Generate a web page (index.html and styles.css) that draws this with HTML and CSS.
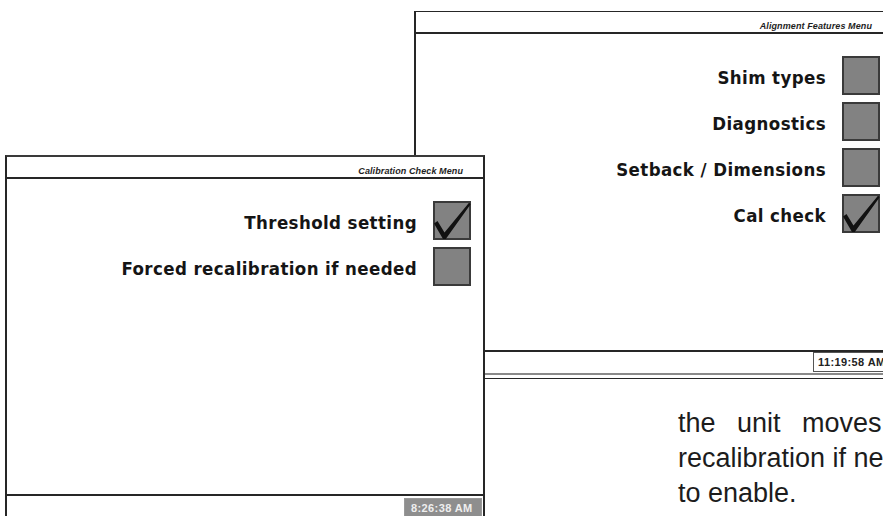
FILE: index.html
```html
<!DOCTYPE html>
<html lang="en">
<head>
<meta charset="utf-8">
<title>Calibration Check Menu</title>
<link rel="stylesheet" href="styles.css">
</head>
<body>
<div class="desk">
  <section class="win win-back">
    <header class="win-title">Alignment Features Menu</header>
    <div class="win-body">
      <ul class="opts">
        <li class="opt"><span class="opt-label">Shim types</span><span class="box"></span></li>
        <li class="opt"><span class="opt-label">Diagnostics</span><span class="box"></span></li>
        <li class="opt"><span class="opt-label">Setback / Dimensions</span><span class="box"></span></li>
        <li class="opt"><span class="opt-label">Cal check</span><span class="box"><svg class="tick" viewBox="2 2 34 34" aria-hidden="true"><path d="M1 22 L4.5 19.5 L11.5 31 L36 1.2 L37.6 2.8 L12.8 37.6 L10 37.6 Z"/></svg></span></li>
      </ul>
    </div>
    <footer class="win-status"><span class="clock">11:19:58 AM</span></footer>
  </section>

  <section class="win win-front">
    <header class="win-title">Calibration Check Menu</header>
    <div class="win-body">
      <ul class="opts">
        <li class="opt"><span class="opt-label">Threshold setting</span><span class="box"><svg class="tick" viewBox="2 2 34 34" aria-hidden="true"><path d="M1 22 L4.5 19.5 L11.5 31 L36 1.2 L37.6 2.8 L12.8 37.6 L10 37.6 Z"/></svg></span></li>
        <li class="opt"><span class="opt-label">Forced recalibration if needed</span><span class="box"></span></li>
      </ul>
    </div>
    <footer class="win-status"><span class="clock clock-dim">8:26:38 AM</span></footer>
  </section>

  <p class="caption"><span class="caption-first">the unit moves</span><br>recalibration if needed<br>to enable.</p>
</div>
</body>
</html>
```

FILE: styles.css
```css
html, body {
  margin: 0;
  padding: 0;
  background: #fff;
  overflow: hidden;
}

.desk {
  position: relative;
  width: 883px;
  height: 516px;
  overflow: hidden;
  background: #fff;
}

.win {
  position: absolute;
  width: 480px;
  height: 368px;
  box-sizing: border-box;
  background: #fff;
  border: 2px solid #262626;
  border-top-width: 1px;
  border-bottom-width: 1px;
  display: flex;
  flex-direction: column;
}

.win-back {
  left: 414px;
  top: 11px;
  z-index: 1;
}

.win-front {
  left: 5px;
  top: 155px;
  border-top: 2px solid #3a3a3a;
  z-index: 2;
}

.win-title {
  height: 22px;
  flex: none;
  border-bottom: 2px solid #262626;
  display: flex;
  justify-content: flex-end;
  align-items: flex-end;
  padding: 0 20px 1px 0;
  box-sizing: border-box;
  font-family: "Liberation Sans", Arial, sans-serif;
  font-style: italic;
  font-weight: bold;
  font-size: 9px;
  line-height: 10px;
  letter-spacing: 0.1px;
  color: #1e1e1e;
}

.win-body {
  flex: 1;
  padding-top: 22px;
}

.opts {
  list-style: none;
  margin: 0;
  padding: 0 12px 0 0;
  display: flex;
  flex-direction: column;
  align-items: flex-end;
  gap: 8px;
}

.opt {
  display: flex;
  align-items: center;
  gap: 16px;
  height: 38px;
}

.opt-label {
  font-family: "DejaVu Sans Condensed", "DejaVu Sans", sans-serif;
  font-stretch: condensed;
  font-weight: bold;
  font-size: 18.5px;
  letter-spacing: 0.4px;
  color: #151515;
  padding-top: 5px;
}

.box {
  width: 38px;
  height: 39px;
  box-sizing: border-box;
  border: 2px solid #3a3a3a;
  background: #828282;
  display: block;
}

.tick {
  display: block;
  width: 34px;
  height: 35px;
  overflow: visible;
  fill: #111;
}

.win-status {
  flex: none;
  height: 21px;
  border-top: 2px solid #262626;
  border-bottom: 2px solid #8a8a8a;
  margin-bottom: 3px;
  display: flex;
  justify-content: flex-end;
  align-items: flex-start;
  padding-right: 1px;
  box-sizing: content-box;
}

.clock {
  width: 78px;
  height: 20px;
  box-sizing: border-box;
  border: 1px solid #555;
  background: #fff;
  display: flex;
  align-items: center;
  padding-left: 4px;
  font-family: "Liberation Sans", Arial, sans-serif;
  font-weight: bold;
  font-size: 11px;
  letter-spacing: 0.4px;
  color: #222;
}

.clock-dim {
  margin-top: 2px;
  background: #8e8e8e;
  border-color: #9a9a9a;
  color: #eeeeee;
  padding-left: 6px;
}

.caption {
  position: absolute;
  left: 678px;
  top: 406px;
  margin: 0;
  font-family: "Liberation Sans", Arial, sans-serif;
  font-size: 27px;
  line-height: 35px;
  color: #1c1c1c;
  white-space: nowrap;
}

.caption-first {
  word-spacing: 14px;
}
```
